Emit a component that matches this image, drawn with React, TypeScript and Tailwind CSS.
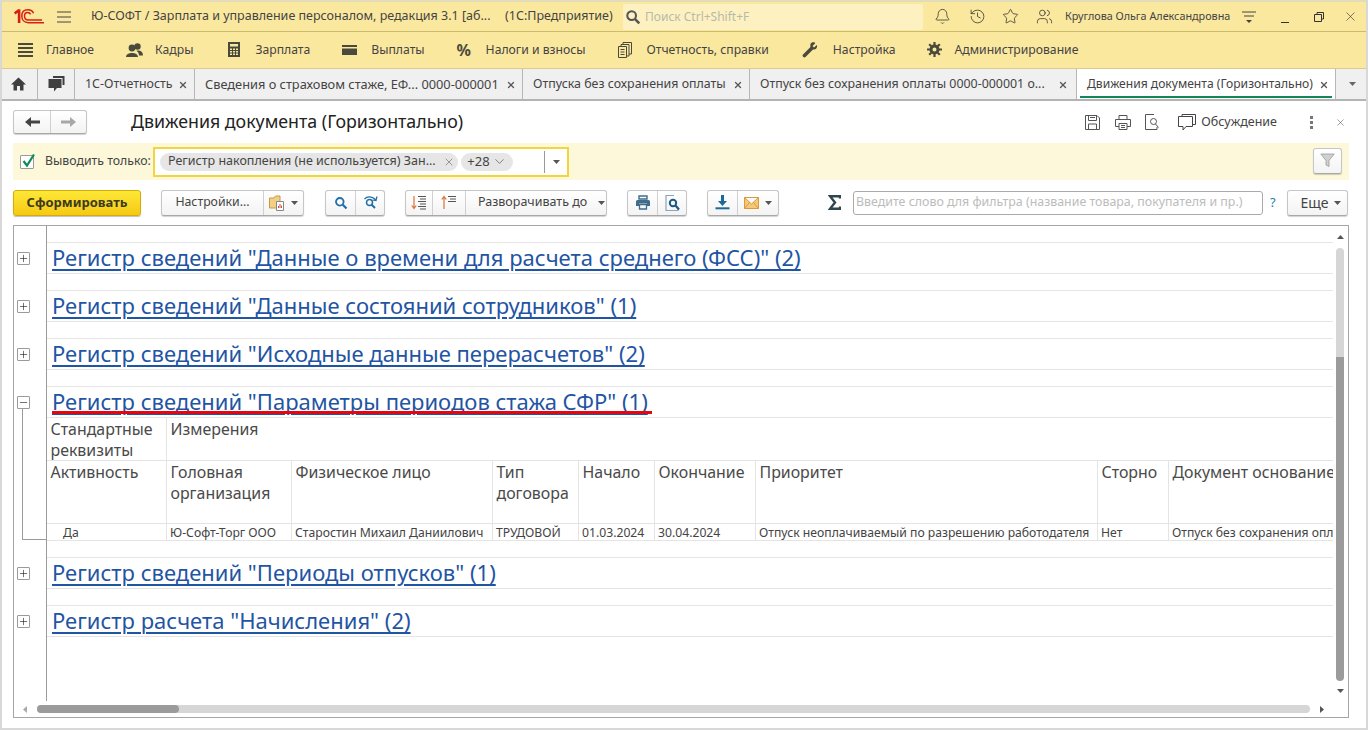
import { ReactNode } from 'react'
import { Bell, ChevronDown, History, Minus, Plus, Star, Users, X } from 'lucide-react'

const font = "[font-family:'Liberation_Sans',Arial,sans-serif]"

function Logo() {
  return (
    <svg width="30" height="15" viewBox="0 0 30 15" fill="none">
      <path d="M0 3.2 L4 0.3 H6.4 V14 H3.8 V3.8 L1.2 5.4 Z" fill="#d81f14" />
      <path d="M19.5 4.2 C18.6 1.6 16 0.8 13.8 0.8 C10 0.8 7.8 3.4 7.8 7 C7.8 11 10.4 13.7 14.4 13.7 H30" stroke="#d81f14" strokeWidth="1.5" />
      <path d="M16.6 5.4 C16 3.9 14.9 3.4 13.6 3.4 C11.6 3.4 10.5 5 10.5 7 C10.5 9.4 12 11 14.4 11 H28" stroke="#d81f14" strokeWidth="1.5" />
    </svg>
  )
}

function Burger() {
  return (
    <svg width="16" height="14" viewBox="0 0 16 14" stroke="#444" strokeWidth="1.2">
      <path d="M1 2 H15 M1 7 H15 M1 12 H15" />
    </svg>
  )
}

function NavItem({ icon, label, className }: { icon: ReactNode; label: string; className: string }) {
  return (
    <div className={`flex items-center ${className}`}>
      {icon}
      <span>{label}</span>
    </div>
  )
}

function Tab({ label, className, active }: { label: string; className: string; active?: boolean }) {
  return (
    <div className={`relative flex items-center justify-between pl-[10px] pt-[1px] border-r border-[#b8b8b8] ${className} ${active ? 'bg-white' : ''}`}>
      <span className="whitespace-nowrap">{label}</span>
      <X size={10} strokeWidth={3} className="text-[#555] shrink-0" />
      {active && <div className="absolute left-[3px] right-[3px] bottom-[1px] h-[2px] bg-[#13875a]" />}
    </div>
  )
}

function Btn({ children, className = '' }: { children: ReactNode; className?: string }) {
  return (
    <div className={`flex items-center justify-center h-[26px] border border-[#c6c6c6] border-b-[#a8a8a8] rounded-[3px] bg-gradient-to-b from-white to-[#f3f3f3] shadow-[0_1px_1px_rgba(0,0,0,0.18)] ${className}`}>
      {children}
    </div>
  )
}

function Seg({ children, className = '' }: { children: ReactNode; className?: string }) {
  return <div className={`flex items-center justify-center h-full border-r border-[#d0d0d0] last:border-r-0 ${className}`}>{children}</div>
}

function Caret({ color = '#555' }: { color?: string }) {
  return (
    <svg width="7" height="4" viewBox="0 0 7 4" className="shrink-0">
      <path d="M0 0 H7 L3.5 4 Z" fill={color} />
    </svg>
  )
}

function Magnifier({ color = '#1f6fa8', size = 14 }: { color?: string; size?: number }) {
  return (
    <svg width={size} height={size} viewBox="0 0 14 14" fill="none" stroke={color} strokeWidth="1.8">
      <circle cx="5.8" cy="5.8" r="3.8" />
      <path d="M8.8 8.8 L12.5 12.5" strokeWidth="2.2" />
    </svg>
  )
}

function PrinterIcon({ color = '#3f6c8c' }: { color?: string }) {
  return (
    <svg width="16" height="15" viewBox="0 0 16 15" fill={color}>
      <path d="M4 1 H12 V4 H4 Z" fill="none" stroke={color} strokeWidth="1.4" />
      <path d="M2.5 5 H13.5 Q15 5 15 6.5 V11 H12 V8.5 H4 V11 H1 V6.5 Q1 5 2.5 5 Z" />
      <path d="M4.5 9.5 H11.5 V14 H4.5 Z" fill="none" stroke={color} strokeWidth="1.3" />
    </svg>
  )
}

function Expander({ open }: { open?: boolean }) {
  return (
    <div className="flex items-center justify-center w-[13px] h-[13px] border border-[#9a9a9a] rounded-[1px] bg-white">
      {open ? <Minus size={11} strokeWidth={1.4} color="#222" /> : <Plus size={11} strokeWidth={1.4} color="#222" />}
    </div>
  )
}

function GroupRow({ title, open }: { title: string; open?: boolean }) {
  return (
    <div className="flex h-[48px]">
      <div className="w-[16px] shrink-0 flex items-start justify-end pt-[26px]">
        <Expander open={open} />
      </div>
      <div className="w-[16px] shrink-0" />
      <div className="w-[1px] shrink-0 bg-[#9b9b9b]" />
      <div className="flex-1 min-w-0 mr-[15px] pt-[16px]">
        <div className="h-[32px] border-y border-[#e4e4e4] pl-[5px] pb-[2px] flex items-center">
          <span className="text-[#1f55a3] underline text-[22px] leading-[28px] whitespace-nowrap decoration-[1.6px] underline-offset-[3px]">{title}</span>
        </div>
      </div>
    </div>
  )
}

const colClass = 'border-r border-b border-[#e4e4e4] pl-[3.5px] pr-[2px] pt-[1px] text-[#4a4a4a] leading-[21px] text-[15.9px]'
const cellClass = 'border-r border-b border-[#e4e4e4] px-[3px] pt-[1px] text-[#444] text-[12.2px] leading-[16px] whitespace-nowrap overflow-hidden'

export default function App() {
  return (
    <div className={`w-[1368px] h-[730px] overflow-hidden flex flex-col bg-white border-x-2 border-b-2 border-[#d8d8d8] text-[#444] text-[12.5px] ${font}`}>
      {/* title bar */}
      <div className="h-[32px] shrink-0 bg-[#fbe89f] border-t-2 border-[#e2dcb8] border-b border-b-[#cdbb6c] flex items-center -mx-[2px] pl-[14px]">
        <Logo />
        <div className="ml-[12px]"><Burger /></div>
        <span className="ml-[19px] w-[414px] whitespace-nowrap">Ю-СОФТ / Зарплата и управление персоналом, редакция 3.1 [аб...</span>
        <span className="w-[118px] whitespace-nowrap">(1С:Предприятие)</span>
        <div className="w-[300px] h-[26px] bg-[#fdf1c1] flex items-center pl-[2px] text-[#b9b9a8] text-[12px] rounded-[2px]">
          <Magnifier color="#555" size={16} />
          <span className="ml-[4px]">Поиск Ctrl+Shift+F</span>
        </div>
        <Bell size={17} strokeWidth={1.1} className="ml-[11px] text-[#333]" />
        <History size={17} strokeWidth={1.1} className="ml-[18px] text-[#333]" />
        <Star size={17} strokeWidth={1.1} className="ml-[16px] text-[#333]" />
        <Users size={17} strokeWidth={1.1} className="ml-[17px] text-[#333]" />
        <span className="ml-[12px] w-[165px] text-[10.8px] whitespace-nowrap">Круглова Ольга Александровна</span>
        <svg width="16" height="14" viewBox="0 0 16 14" stroke="#444" fill="#444" className="ml-[11px]">
          <path d="M1 2 H15 M3 6 H13" strokeWidth="1" />
          <path d="M5 10 H11 L8 13 Z" stroke="none" />
        </svg>
        <div className="ml-[24px] w-[8px] h-[1px] bg-[#333] self-end mb-[8px]" />
        <svg width="10" height="10" viewBox="0 0 10 10" fill="none" stroke="#333" className="ml-[25px]">
          <path d="M3 2.5 V0.5 H9.5 V7 H7.5 M0.5 2.5 H7.5 V9.5 H0.5 Z" />
        </svg>
        <X size={15} strokeWidth={1} className="ml-[19px] text-[#333]" />
      </div>

      {/* section bar */}
      <div className="h-[37px] shrink-0 bg-[#fbe89f] border-b border-[#d9cc92] flex items-center -mx-[2px] text-[12.2px]">
        <NavItem className="ml-[18px]" label="Главное" icon={
          <svg width="15" height="15" viewBox="0 0 15 15" fill="#4a4a3c" className="mr-[13px]"><path d="M0 1 H15 V3 H0 Z M0 5 H15 V7 H0 Z M0 9 H15 V11 H0 Z M0 13 H15 V15 H0 Z" /></svg>
        } />
        <NavItem className="ml-[32px]" label="Кадры" icon={
          <svg width="17" height="16" viewBox="0 0 17 16" fill="#4a4a3c" className="mr-[12px]"><circle cx="6" cy="6" r="3.4" /><circle cx="11.5" cy="4.5" r="3.2" /><path d="M0 15 C0 9.5 12 9.5 12 15 Z M10.5 8.8 C14 8 17 9.5 17 13.5 H13 C13 11.5 12 10 10.5 8.8 Z" /></svg>
        } />
        <NavItem className="ml-[34px]" label="Зарплата" icon={
          <svg width="14" height="15" viewBox="0 0 14 15" fill="#4a4a3c" className="mr-[14px]"><path fillRule="evenodd" d="M1 0 H13 V15 H1 Z M3 2 V4.5 H11 V2 Z M3 6.5 V8 H5 V6.5 Z M6 6.5 V8 H8 V6.5 Z M9 6.5 V8 H11 V6.5 Z M3 9 V10.5 H5 V9 Z M6 9 V10.5 H8 V9 Z M9 9 V10.5 H11 V9 Z M3 11.5 V13 H5 V11.5 Z M6 11.5 V13 H8 V11.5 Z M9 11.5 V13 H11 V11.5 Z" /></svg>
        } />
        <NavItem className="ml-[32px]" label="Выплаты" icon={
          <svg width="15" height="12" viewBox="0 0 15 12" fill="#4a4a3c" className="mr-[14px]"><path fillRule="evenodd" d="M0 1 H15 V11 H0 Z M0 3 V4.5 H15 V3 Z" /></svg>
        } />
        <NavItem className="ml-[32px]" label="Налоги и взносы" icon={
          <span className="mr-[15px] w-[14px] text-[16px] font-bold text-[#4a4a3c]">%</span>
        } />
        <NavItem className="ml-[33px]" label="Отчетность, справки" icon={
          <svg width="14" height="16" viewBox="0 0 14 16" fill="none" stroke="#4a4a3c" className="mr-[14px]"><path d="M5 2.5 V0.5 H13.5 V12 H11 M3 4.5 V2.5 H11 V14 H9 M0.5 4.5 H8.5 V15.5 H0.5 Z M2.5 7.5 H6.5 M2.5 10 H6.5 M2.5 12.5 H6.5" /></svg>
        } />
        <NavItem className="ml-[32px]" label="Настройка" icon={
          <svg width="17" height="16" viewBox="0 0 17 16" fill="#4a4a3c" className="mr-[15px]"><path d="M11 0.5 C13.5 0 14.5 1 14 1.5 L11.5 4 L13 5.5 L15.8 3 C16.5 4.5 16 8 12 7.5 L4.5 15 C3 16.5 0.5 14 2 12.5 L9.5 5 C9 3 9.5 1 11 0.5 Z" /></svg>
        } />
        <NavItem className="ml-[31px]" label="Администрирование" icon={
          <svg width="15" height="15" viewBox="0 0 15 15" className="mr-[13px]" fill="none" stroke="#4a4a3c"><circle cx="7.5" cy="7.5" r="3.5" strokeWidth="3" /><path d="M7.5 0 V3 M7.5 12 V15 M0 7.5 H3 M12 7.5 H15 M2.2 2.2 L4.3 4.3 M10.7 10.7 L12.8 12.8 M2.2 12.8 L4.3 10.7 M10.7 4.3 L12.8 2.2" strokeWidth="2.2" /></svg>
        } />
      </div>

      {/* tabs */}
      <div className="h-[32px] shrink-0 bg-[#f0f0f0] border-b-2 border-[#b4b4b4] flex items-stretch -mx-[2px] text-[12.4px]">
        <div className="w-[38px] flex items-center justify-center border-r border-[#b8b8b8]">
          <svg width="15" height="14" viewBox="0 0 15 14" fill="#3f3f3f"><path d="M7.5 0.5 L15 7.5 H12.5 V13.5 H9 V9 H6 V13.5 H2.5 V7.5 H0 Z" /></svg>
        </div>
        <div className="w-[37px] flex items-center justify-center border-r border-[#b8b8b8]">
          <svg width="17" height="16" viewBox="0 0 17 16" fill="#3f3f3f"><path d="M5 0 H16.5 V9 H14.5 V2 H5 Z" /><path d="M0.5 3 H13.5 V12 H9 L6 15.5 V12 H0.5 Z" /></svg>
        </div>
        <Tab label="1С-Отчетность" className="w-[120px] pr-[6px]" />
        <Tab label="Сведения о страховом стаже, ЕФ... 0000-000001" className="w-[328px] pr-[6px] text-[12.8px]" />
        <Tab label="Отпуска без сохранения оплаты" className="w-[227px] pr-[6px]" />
        <Tab label="Отпуск без сохранения оплаты 0000-000001 о..." className="w-[327px] pr-[8px]" />
        <Tab label="Движения документа (Горизонтально)" className="w-[259px] pr-[6px] text-[12.1px]" active />
        <div className="flex-1 flex items-center justify-center"><Caret color="#666" /></div>
      </div>

      {/* form */}
      <div className="flex-1 min-h-0 flex flex-col pl-[11px] pr-[17px] pt-[9px]">
        {/* form header */}
        <div className="h-[24px] shrink-0 flex items-center">
          <div className="flex items-center w-[74px] h-[24px] border border-[#c6c6c6] border-b-[#a8a8a8] rounded-[3px] bg-gradient-to-b from-white to-[#f3f3f3] shadow-[0_1px_1px_rgba(0,0,0,0.18)]">
            <Seg className="w-[37px]">
              <svg width="15" height="10" viewBox="0 0 15 10" fill="#444"><path d="M0 5 L6 0 V3.5 H15 V6.5 H6 V10 Z" /></svg>
            </Seg>
            <Seg className="flex-1">
              <svg width="15" height="10" viewBox="0 0 15 10" fill="#a8a8a8"><path d="M15 5 L9 0 V3.5 H0 V6.5 H9 V10 Z" /></svg>
            </Seg>
          </div>
          <span className="ml-[44px] pb-[1px] text-[17.8px] text-[#222] whitespace-nowrap">Движения документа (Горизонтально)</span>
          <div className="ml-auto flex items-center pr-[3px]">
            <svg width="15" height="15" viewBox="0 0 15 15" fill="none" stroke="#555"><path d="M0.5 0.5 H12 L14.5 3 V14.5 H0.5 Z M3.5 0.5 V5.5 H11.5 V0.5 M3.5 14.5 V9 H11.5 V14.5 M5 2.5 H10" /></svg>
            <svg width="16" height="15" viewBox="0 0 16 15" fill="none" stroke="#555" className="ml-[15px]"><path d="M4 4 V0.5 H12 V4 M4 11.5 H0.5 V4.5 H15.5 V11.5 H12 M4 8.5 H12 V14.5 H4 Z M6 10.5 H10 M6 12.5 H10" /></svg>
            <svg width="15" height="16" viewBox="0 0 15 16" fill="none" stroke="#555" className="ml-[14px]"><path d="M9 0.5 H0.5 V15.5 H12 V13" /><circle cx="8.5" cy="7.5" r="3" /><path d="M10.5 10 L13.5 13.5" /></svg>
            <svg width="18" height="17" viewBox="0 0 18 17" fill="none" stroke="#444" className="ml-[18px]"><path d="M4 2.5 V0.5 H17.5 V10.5 H15 M0.5 2.5 H14.5 V12.5 H8 L5 16 V12.5 H0.5 Z" /></svg>
            <span className="ml-[5px] text-[#444]">Обсуждение</span>
            <div className="ml-[33px] flex flex-col gap-[2px]">
              <div className="w-[3px] h-[3px] bg-[#777]" />
              <div className="w-[3px] h-[3px] bg-[#777]" />
              <div className="w-[3px] h-[3px] bg-[#777]" />
            </div>
            <X size={11} strokeWidth={1.2} className="ml-[22px] text-[#555]" />
          </div>
        </div>

        {/* filter strip */}
        <div className="h-[37px] mt-[9px] shrink-0 bg-[#fdf8d9] flex items-center">
          <div className="ml-[7px] w-[14px] h-[14px] border border-[#9a9a9a] bg-white rounded-[1px] relative">
            <svg width="16" height="16" viewBox="0 0 16 16" fill="none" stroke="#128a5a" strokeWidth="2.2" className="absolute -top-[3px] left-0"><path d="M2.5 8 L6 12.5 L13 1.5" /></svg>
          </div>
          <span className="ml-[11px] w-[108px] text-[12.3px] whitespace-nowrap">Выводить только:</span>
          <div className="w-[416px] h-[30px] border-2 border-[#f2d43c] bg-white flex items-center pl-[5px]">
            <div className="w-[298px] h-[18px] rounded-[9px] bg-[#e6e6e6] flex items-center justify-between pl-[8px] pr-[3px]">
              <span className="whitespace-nowrap">Регистр накопления (не используется) Зан...</span>
              <X size={12} strokeWidth={1} />
            </div>
            <div className="ml-[3px] w-[52px] h-[18px] rounded-[9px] bg-[#e6e6e6] flex items-center justify-center gap-[2px] text-[13px]">
              <span>+28</span>
              <ChevronDown size={15} strokeWidth={1} />
            </div>
            <div className="ml-[31px] w-[1px] h-[22px] bg-[#9a9a9a]" />
            <div className="flex-1 flex items-center justify-center"><Caret /></div>
          </div>
          <div className="ml-auto mr-[7px] mb-[2px]">
            <Btn className="w-[29px]">
              <svg width="15" height="15" viewBox="0 0 15 15" fill="#d0d0d0" stroke="#9a9a9a" strokeWidth="0.8"><path d="M0.8 1 H14.2 L9 7.5 V13.5 L6 12 V7.5 Z" /></svg>
            </Btn>
          </div>
        </div>

        {/* command bar */}
        <div className="h-[27px] mt-[9px] shrink-0 flex items-center">
          <div className="w-[128px] h-[26px] flex items-center justify-center rounded-[3px] border border-[#d2ad0a] bg-gradient-to-b from-[#fde835] to-[#f6c911] shadow-[0_1px_1px_rgba(0,0,0,0.25)] font-bold text-[13px] text-[#3d3a1d]">Сформировать</div>
          <Btn className="ml-[20px] w-[143px]">
            <Seg className="w-[102px] text-[12.3px]">Настройки...</Seg>
            <Seg className="flex-1 gap-[6px]">
              <svg width="16" height="16" viewBox="0 0 16 16"><path d="M0.5 3 H5 L6.5 1 H11 V13 H0.5 Z" fill="#f2cf85" stroke="#c79a45" /><path d="M7.5 6.5 H14.5 V15.5 H7.5 Z" fill="#fff" stroke="#888" /><path d="M9.5 13 V11 M11 13 V9 M12.5 13 V10.5" stroke="#c0504d" /></svg>
              <Caret />
            </Seg>
          </Btn>
          <Btn className="ml-[21px] w-[60px]">
            <Seg className="w-[30px]"><Magnifier /></Seg>
            <Seg className="flex-1">
              <svg width="15" height="15" viewBox="0 0 15 15" fill="none" stroke="#1f6fa8" strokeWidth="1.5"><circle cx="6.5" cy="7.5" r="3" /><path d="M8.7 9.7 L12 13" strokeWidth="2" /><path d="M1.5 4 C4 1 9 1 12.5 4.5 M14 1.5 L13 5.5 L9.5 5" strokeWidth="1.2" /></svg>
            </Seg>
          </Btn>
          <Btn className="ml-[20px] w-[202px]">
            <Seg className="w-[27px]">
              <svg width="16" height="15" viewBox="0 0 16 15" fill="none"><path d="M3 1 V13 M0.8 10.5 L3 13.5 L5.2 10.5" stroke="#d9743c" strokeWidth="1.2" /><path d="M7 1.5 H15 M9 4 H15 M7 6.5 H15 M9 9 H15 M7 11.5 H15 M9 14 H15" stroke="#555" /></svg>
            </Seg>
            <Seg className="w-[33px]">
              <svg width="16" height="15" viewBox="0 0 16 15" fill="none"><path d="M3 14 V2 M0.8 4.5 L3 1.5 L5.2 4.5" stroke="#d9743c" strokeWidth="1.2" /><path d="M7 1.5 H15 M9 4 H15 M7 6.5 H15" stroke="#555" /></svg>
            </Seg>
            <Seg className="flex-1 !justify-start gap-[11px] pl-[12px]">
              <span>Разворачивать до</span>
              <Caret />
            </Seg>
          </Btn>
          <Btn className="ml-[20px] w-[60px]">
            <Seg className="w-[30px]"><PrinterIcon /></Seg>
            <Seg className="flex-1">
              <svg width="15" height="16" viewBox="0 0 15 16" fill="none" stroke="#1c5a86"><path d="M9 0.5 H1 V15.5 H13 V14" strokeWidth="1.2" stroke="#8aa4b8" /><circle cx="8" cy="8" r="3.2" strokeWidth="2" /><path d="M10.5 10.5 L14 14.5" strokeWidth="2.2" /></svg>
            </Seg>
          </Btn>
          <Btn className="ml-[20px] w-[72px]">
            <Seg className="w-[30px]">
              <svg width="15" height="15" viewBox="0 0 15 15" fill="#1c6a96"><path d="M6 0 H9 V6 H12 L7.5 11 L3 6 H6 Z" /><path d="M0.5 12.3 H14.5 V14.3 H0.5 Z" /></svg>
            </Seg>
            <Seg className="flex-1 gap-[6px]">
              <svg width="15" height="12" viewBox="0 0 15 12" fill="#f5c878" stroke="#d99a3c"><path d="M0.5 0.5 H14.5 V11.5 H0.5 Z M0.5 0.5 L7.5 7 L14.5 0.5 M0.5 11.5 L5.5 5.5 M14.5 11.5 L9.5 5.5" /></svg>
              <Caret />
            </Seg>
          </Btn>
          <svg width="13" height="15" viewBox="0 0 13 15" fill="none" stroke="#2f4550" strokeWidth="2.4" className="ml-[49px]"><path d="M12 3.5 V1.2 H2 L7 7.5 L2 13.8 H12 V11.5" /></svg>
          <div className="ml-[12px] w-[410px] h-[24px] border border-[#aaa] rounded-[3px] flex items-center px-[2px] text-[12.4px] text-[#bcbcbc] whitespace-nowrap overflow-hidden">Введите слово для фильтра (название товара, покупателя и пр.)</div>
          <span className="ml-[7px] w-[17px] text-[#1f7fb0] text-[13px]">?</span>
          <Btn className="w-[61px] gap-[5px] text-[14px] pl-[6px]">
            <span>Еще</span>
            <Caret />
          </Btn>
        </div>

        {/* report */}
        <div className="relative h-[493px] mt-[9px] shrink-0 border border-[#a6a6a6] flex flex-col overflow-hidden">
          <div className="flex flex-1 min-h-0">
            <div className="flex-1 min-w-0 flex flex-col">
              <GroupRow title='Регистр сведений "Данные о времени для расчета среднего (ФСС)" (2)' />
              <GroupRow title='Регистр сведений "Данные состояний сотрудников" (1)' />
              <GroupRow title='Регистр сведений "Исходные данные перерасчетов" (2)' />
              <GroupRow title='Регистр сведений "Параметры периодов стажа СФР" (1)' open />

              <div className="flex h-[123px]">
                <div className="w-[32px] shrink-0" />
                <div className="w-[1px] shrink-0 bg-[#9b9b9b]" />
                <div className="flex-1 min-w-0 mr-[15px] overflow-hidden">
                  <div className="grid grid-cols-[120px_125px_201px_86px_76px_101px_342px_71px_165px] grid-rows-[43px_63px_17px]">
                    <div className={colClass}>Стандартные реквизиты</div>
                    <div className={`${colClass} col-span-8 !border-r-0`}>Измерения</div>
                    <div className={colClass}>Активность</div>
                    <div className={colClass}>Головная организация</div>
                    <div className={colClass}>Физическое лицо</div>
                    <div className={colClass}>Тип договора</div>
                    <div className={colClass}>Начало</div>
                    <div className={colClass}>Окончание</div>
                    <div className={colClass}>Приоритет</div>
                    <div className={colClass}>Сторно</div>
                    <div className={`${colClass} whitespace-nowrap !border-r-0 !pr-0`}>Документ основание</div>
                    <div className={`${cellClass} pl-[16px]`}>Да</div>
                    <div className={cellClass}>Ю-Софт-Торг ООО</div>
                    <div className={cellClass}>Старостин Михаил Даниилович</div>
                    <div className={cellClass}>ТРУДОВОЙ</div>
                    <div className={cellClass}>01.03.2024</div>
                    <div className={cellClass}>30.04.2024</div>
                    <div className={cellClass}>Отпуск неоплачиваемый по разрешению работодателя</div>
                    <div className={cellClass}>Нет</div>
                    <div className={`${cellClass} !border-r-0`}>Отпуск без сохранения оплаты</div>
                  </div>
                </div>
              </div>

              <GroupRow title='Регистр сведений "Периоды отпусков" (1)' />
              <GroupRow title='Регистр расчета "Начисления" (2)' />
              <div className="flex flex-1">
                <div className="w-[32px] shrink-0" />
                <div className="w-[1px] shrink-0 bg-[#9b9b9b]" />
              </div>
            </div>
            {/* vertical scrollbar */}
            <div className="absolute right-[4px] top-0 bottom-[16px] w-[8px] flex flex-col items-center">
              <div className="h-[22px] flex items-center justify-center shrink-0"><svg width="7" height="4" viewBox="0 0 7 4"><path d="M0 4 H7 L3.5 0 Z" fill="#555" /></svg></div>
              <div className="w-[8px] h-[109px] bg-[#d6d6d6] rounded-t-[4px] shrink-0" />
              <div className="w-[8px] h-[324px] bg-[#9b9b9b] rounded-b-[4px] shrink-0" />
              <div className="flex-1 flex items-center justify-center"><Caret /></div>
            </div>
          </div>
          {/* horizontal scrollbar */}
          <div className="h-[16px] shrink-0 flex items-center pl-[9px] relative">
            <svg width="4" height="7" viewBox="0 0 4 7"><path d="M4 0 V7 L0 3.5 Z" fill="#aaa" /></svg>
            <div className="ml-[10px] w-[1273px] h-[8px] rounded-[4px] bg-[#d6d6d6]">
              <div className="w-[142px] h-[8px] rounded-[4px] bg-[#9b9b9b]" />
            </div>
            <svg width="4" height="7" viewBox="0 0 4 7" className="ml-[10px]"><path d="M0 0 V7 L4 3.5 Z" fill="#555" /></svg>
          </div>
          {/* tree bracket + red mark */}
          <div className="absolute left-[8px] top-[183px] w-[25px] h-[131px] border-l border-b border-[#9b9b9b]" />
          <div className="absolute left-[38px] top-[185px] w-[600px] h-[3px] bg-[#e30613]" />
        </div>
      </div>
    </div>
  )
}
